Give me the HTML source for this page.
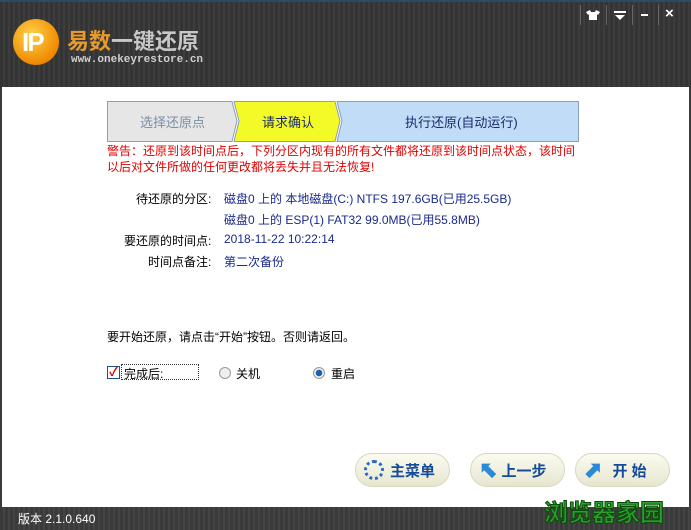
<!DOCTYPE html><html><head><meta charset="utf-8"><style>
*{margin:0;padding:0;box-sizing:border-box}
body{width:691px;height:530px;overflow:hidden;background:#3a3a3a;font-family:"Liberation Sans","Noto Sans CJK SC","WenQuanYi Zen Hei",sans-serif;font-size:12px;position:relative}
.hdr{position:absolute;left:0;top:0;width:691px;height:88px;background:repeating-linear-gradient(90deg,#343434 0 3px,#3d3d3d 3px 5px),#383838;border-top:2px solid #2c4a66}
.body{position:absolute;left:2px;top:87px;width:687px;height:420px;background:#fff}
.ftr{position:absolute;left:0;top:507px;width:691px;height:23px;background:repeating-linear-gradient(90deg,#3a3a3a 0 3px,#444 3px 5px);color:#fff;font-size:12px}
.abs{position:absolute;white-space:nowrap}
.blue{color:#1a2a8c}
.btn{position:absolute;top:453px;height:34px;border-radius:17px;background:linear-gradient(#fbfbf0,#e6e6cf);border:1px solid #d8d8c0;color:#134a9a;font-weight:bold;font-size:15px;display:flex;align-items:center}
.sep{position:absolute;top:3px;width:1px;height:20px;background:#666}
</style></head><body>
<div class="hdr">
 <div class="abs" style="left:13px;top:17px;width:46px;height:46px;border-radius:50%;background:radial-gradient(circle at 40% 35%,#ffd24a,#f08a00 70%,#b85a00)"></div>
 <div class="abs" style="left:22px;top:25px;color:#fff;font-weight:bold;font-size:26px;letter-spacing:-2px">IP</div>
 <div class="abs" style="left:67px;top:22px;font-size:22px;font-weight:bold;color:#e89a2c">易数<span style="color:#c8c8c8">一键还原</span></div>
 <div class="abs" style="left:71px;top:52px;font-size:11px;font-weight:bold;color:#d0d0d0;font-family:'Liberation Mono',monospace">www.onekeyrestore.cn</div>
 <div class="sep" style="left:580px"></div><div class="sep" style="left:606px"></div><div class="sep" style="left:632px"></div><div class="sep" style="left:658px"></div>
 <svg class="abs" style="left:586px;top:8px" width="14" height="10"><path d="M0,2 L4,0 L5,2 L9,2 L10,0 L14,2 L12,5 L11,4 L11,10 L3,10 L3,4 L2,5Z" fill="#fff"/></svg>
 <svg class="abs" style="left:614px;top:9px" width="12" height="9"><rect x="0" y="0" width="12" height="2" fill="#fff"/><polygon points="1,4 11,4 6,9" fill="#fff"/></svg>
 <div class="abs" style="left:641px;top:12px;width:7px;height:2px;background:#fff"></div>
 <div class="abs" style="left:665px;top:3px;color:#fff;font-size:15px;font-weight:bold">×</div>
</div>
<div class="body"></div>
<svg class="abs" style="left:107px;top:101px" width="472" height="41">
 <polygon points="0.5,0.5 125,0.5 130,20 125,40.5 0.5,40.5" fill="#e6e6e6" stroke="#8aa0b8"/>
 <polygon points="127,0.5 228,0.5 233,20 228,40.5 127,40.5 132,20" fill="#f4fa28" stroke="#8aa0b8"/>
 <polygon points="230,0.5 471.5,0.5 471.5,40.5 230,40.5 235,20" fill="#c0dcf6" stroke="#8aa0b8"/>
</svg>
<div class="abs" style="left:140px;top:112px;font-size:13px;color:#7a90a8">选择还原点</div>
<div class="abs" style="left:262px;top:112px;font-size:13px;color:#1a2a6c">请求确认</div>
<div class="abs" style="left:405px;top:112px;font-size:13px;color:#1a2a6c">执行还原(自动运行)</div>
<div class="abs" style="left:107px;top:143px;color:#e00000;font-size:12px;line-height:16px">警告：还原到该时间点后，下列分区内现有的所有文件都将还原到该时间点状态，该时间<br>以后对文件所做的任何更改都将丢失并且无法恢复!</div>
<div class="abs" style="left:136px;top:190px">待还原的分区:</div>
<div class="abs blue" style="left:224px;top:190px">磁盘0 上的 本地磁盘(C:) NTFS 197.6GB(已用25.5GB)</div>
<div class="abs blue" style="left:224px;top:211px">磁盘0 上的 ESP(1) FAT32 99.0MB(已用55.8MB)</div>
<div class="abs" style="left:124px;top:232px">要还原的时间点:</div>
<div class="abs blue" style="left:224px;top:232px">2018-11-22 10:22:14</div>
<div class="abs" style="left:148px;top:253px">时间点备注:</div>
<div class="abs blue" style="left:224px;top:253px">第二次备份</div>
<div class="abs" style="left:107px;top:328px">要开始还原，请点击“开始”按钮。否则请返回。</div>
<div class="abs" style="left:107px;top:366px;width:13px;height:13px;border:1px solid #1c5180;background:#fff;color:#d00;font-size:12px;line-height:11px;text-align:center;font-weight:bold">✓</div>
<div class="abs" style="left:121px;top:364px;width:78px;height:16px;border:1px dotted #333"></div>
<div class="abs" style="left:124px;top:365px">完成后:</div>
<div class="abs" style="left:219px;top:367px;width:12px;height:12px;border-radius:50%;border:1px solid #999;background:#eee"></div>
<div class="abs" style="left:236px;top:365px">关机</div>
<div class="abs" style="left:313px;top:367px;width:12px;height:12px;border-radius:50%;border:1px solid #999;background:radial-gradient(#1a5fb0 0 3px,#eee 3.5px)"></div>
<div class="abs" style="left:331px;top:365px">重启</div>
<div class="btn" style="left:355px;width:95px"><span style="display:inline-block;width:20px;height:20px;border:3px dotted #2a6ac0;border-radius:50%;margin:0 6px 0 8px"></span>主菜单</div>
<div class="btn" style="left:470px;width:95px"><span style="color:#2a8ad8;font-size:22px;margin:0 4px 0 8px">⬉</span>上一步</div>
<div class="btn" style="left:575px;width:95px"><span style="color:#2a8ad8;font-size:22px;margin:0 10px 0 8px">⬈</span>开 始</div>
<div class="ftr"><span class="abs" style="left:18px;top:3px">版本 2.1.0.640</span></div>
<div class="abs" style="left:544px;top:493px;font-size:24px;font-weight:bold;color:#2aa02a;-webkit-text-stroke:1px #0a4a0a">浏览器家园</div>
</body></html>
